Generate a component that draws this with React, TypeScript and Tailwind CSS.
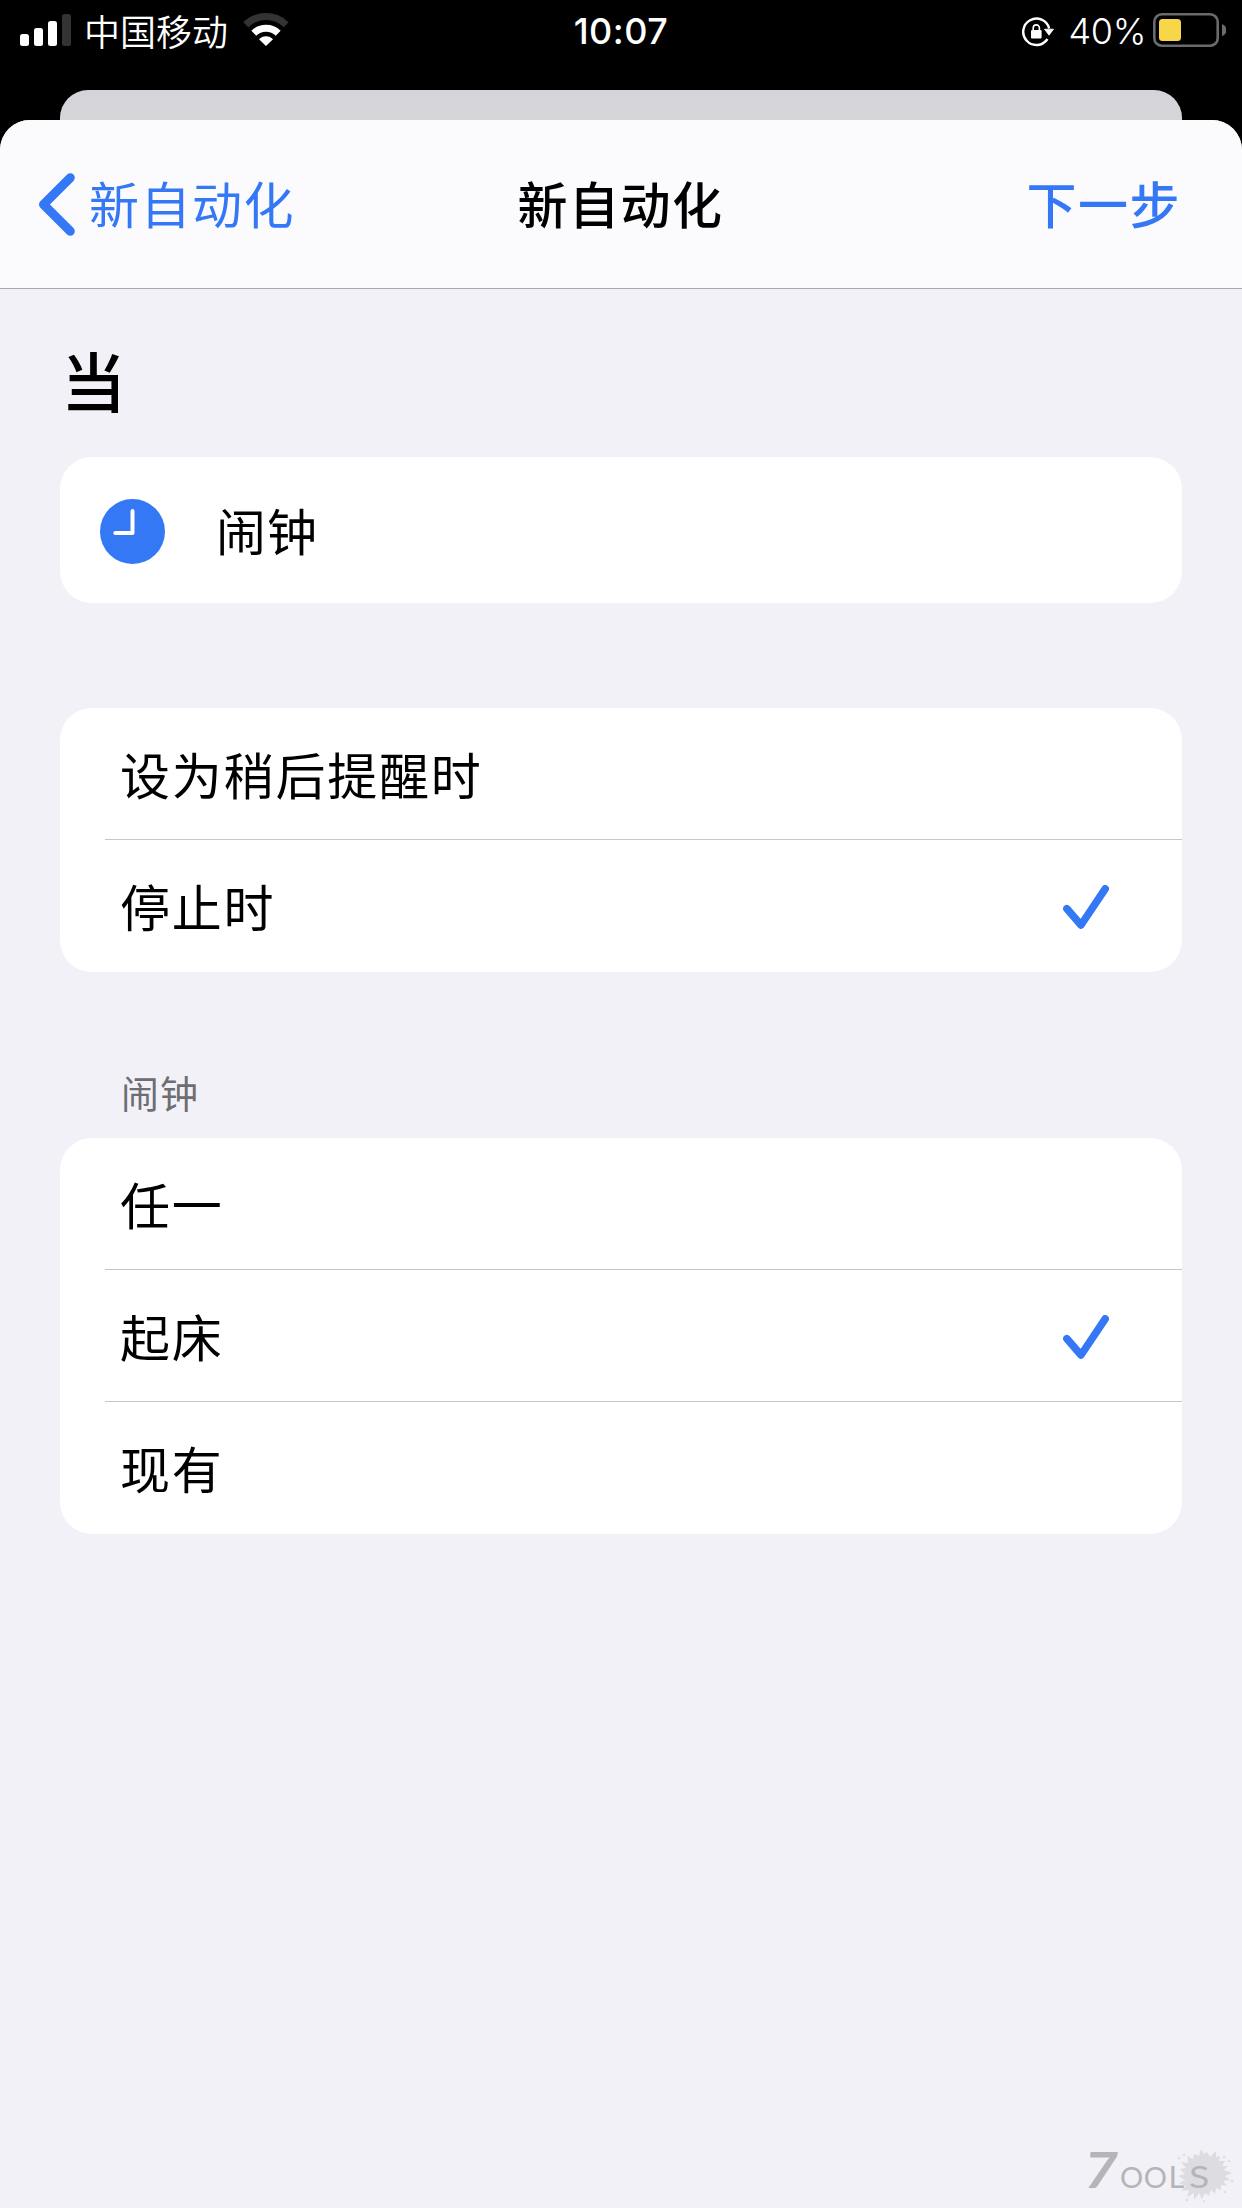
import React, { useState } from 'react';

interface OptionListProps {
  options: string[];
  selected: string;
  onSelect: (option: string) => void;
}

function SignalBars() {
  return (
    <svg className="w-[51px] h-8" viewBox="0 0 51 32" fill="#fff">
      <rect x="0" y="20" width="9" height="12" rx="2.5" />
      <rect x="14" y="14" width="9" height="18" rx="2.5" />
      <rect x="28" y="7" width="9" height="25" rx="2.5" />
      <rect x="42" y="0" width="9" height="32" rx="2.5" fill="#333" />
    </svg>
  );
}

function WifiIcon() {
  return (
    <svg className="w-[46px] h-[33px]" viewBox="0 0 46 33" fill="none">
      <path d="M2.8 11.8 A29 29 0 0 1 43.2 11.8" stroke="#333" strokeWidth="7" />
      <path d="M10.8 20.2 A17.5 17.5 0 0 1 35.2 20.2" stroke="#fff" strokeWidth="7" />
      <path d="M16 26.3 A9.5 9.5 0 0 1 30 26.3 L23 33 Z" fill="#fff" />
    </svg>
  );
}

function RotationLockIcon() {
  return (
    <svg className="w-8 h-[30px]" viewBox="0 0 32 30" fill="none" stroke="#fff">
      <path d="M25.5 22 A13.2 13.2 0 1 1 27.2 11.5" strokeWidth="2.4" />
      <path d="M22.5 12.2 H31.5 L27 18.2 Z" fill="#fff" strokeWidth="0.8" strokeLinejoin="round" />
      <rect x="9" y="13" width="10.6" height="8.4" rx="1.2" fill="#fff" stroke="none" />
      <path d="M11.2 13.5 V11 A3.1 3.1 0 0 1 17.4 11 V13.5" strokeWidth="1.6" />
    </svg>
  );
}

function BatteryIcon() {
  return (
    <svg className="w-[73px] h-[34px]" viewBox="0 0 73 34">
      <rect x="1.3" y="1.3" width="63.4" height="31.4" rx="7.5" fill="none" stroke="#6b6b6b" strokeWidth="2.6" />
      <rect x="6" y="6" width="22" height="22" rx="3.5" fill="#f7d64a" />
      <path d="M69 11 A6.3 6.3 0 0 1 69 23 Z" fill="#6b6b6b" />
    </svg>
  );
}

function ClockIcon() {
  return (
    <svg className="w-[65px] h-[65px]" viewBox="0 0 65 65" fill="none">
      <circle cx="32.5" cy="32.5" r="32.5" fill="#3478f6" />
      <path d="M32.5 12 V34 H15.3" stroke="#fff" strokeWidth="4" strokeLinecap="round" strokeLinejoin="round" />
    </svg>
  );
}

function CheckIcon() {
  return (
    <svg className="w-[46px] h-11" viewBox="0 0 46 44" fill="none">
      <path
        d="M3.9 23.7 L18 40 L42.2 3.9"
        stroke="#3478f6"
        strokeWidth="7.6"
        strokeLinecap="round"
        strokeLinejoin="round"
      />
    </svg>
  );
}

function Splash() {
  return (
    <svg className="absolute right-0.5 top-0 w-[60px] h-[58px]" viewBox="0 0 60 58" fill="#dddde1">
      <path d="M26 3 L29 8 L32 6 L35 11 L41 5 L41 11 L45 10 L44 15 L50 15 L47 20 L53 20 L49 24 L57 27 L50 30 L55 34 L48 35 L52 40 L46 39 L46 44 L41 42 L40 48 L36 44 L34 50 L30 47 L27 53 L24 47 L19 54 L19 47 L12 51 L14 44 L6 45 L11 40 L4 37 L10 34 L3 30 L10 28 L5 23 L11 22 L6 16 L13 17 L12 10 L18 13 L19 8 L24 10 Z" />
      <circle cx="4" cy="12" r="1.3" />
      <circle cx="9" cy="9" r="1.2" />
      <circle cx="49" cy="11" r="1.3" />
      <circle cx="54" cy="15" r="1.2" />
      <circle cx="57" cy="35" r="1.3" />
      <circle cx="50" cy="46" r="1.3" />
      <circle cx="12" cy="54" r="1.3" />
      <circle cx="29" cy="55" r="1" />
    </svg>
  );
}

function OptionList({ options, selected, onSelect }: OptionListProps) {
  return (
    <div className="bg-white rounded-[32px] overflow-hidden">
      {options.map((option, index) => (
        <button key={option} onClick={() => onSelect(option)} className="block w-full h-[132px] pl-[45px]">
          <div
            className={`flex h-full items-center justify-between pl-[15px] pr-[73px] ${
              index < options.length - 1 ? 'border-b border-[#c6c6c8]' : 'pb-px'
            }`}
          >
            <span className="pt-[7px] text-[50px] leading-[76px] tracking-[1.8px]">{option}</span>
            {selected === option && <span className="pt-[3px]"><CheckIcon /></span>}
          </div>
        </button>
      ))}
    </div>
  );
}

export default function App() {
  const [trigger, setTrigger] = useState('停止时');
  const [alarm, setAlarm] = useState('起床');

  return (
    <div className="flex flex-col w-[1242px] h-[2208px] bg-black text-black overflow-hidden font-[Inter,'Noto_Sans_CJK_SC',sans-serif]">
      {/* Status bar */}
      <div className="grid grid-cols-3 h-[90px] pt-[13px] pl-5 pr-4 text-white">
        <div className="flex items-start">
          <span className="pt-px"><SignalBars /></span>
          <span className="ml-[13px] pt-0.5 text-[36px] leading-9 font-[350]">中国移动</span>
          <span className="ml-[15px]"><WifiIcon /></span>
        </div>
        <div className="pr-1 text-center text-[36px] leading-9 font-medium tracking-[0.5px]">10:07</div>
        <div className="flex items-start justify-end">
          <span className="mt-1"><RotationLockIcon /></span>
          <span className="ml-[15px] text-[36px] leading-9 font-light tracking-[-0.4px]">40%</span>
          <span className="ml-[7px]"><BatteryIcon /></span>
        </div>
      </div>

      {/* Sheet behind */}
      <div className="h-[30px] mx-[60px] shrink-0 bg-[#d5d4d9] rounded-t-[28px]" />

      <div className="relative flex flex-1 flex-col bg-[#f2f1f7] rounded-t-[30px] overflow-hidden">
        {/* Navigation bar */}
        <div className="grid grid-cols-[1fr_auto_1fr] items-center h-[169px] pl-[38px] pr-[61px] bg-[#fbfbfd] border-b border-[#a9a9ac] text-[50px] leading-[76px] tracking-[1.5px]">
          <button className="flex items-center text-[#3478f6]">
            <svg className="w-[37px] h-[63px]" viewBox="0 0 37 63" fill="none">
              <path
                d="M32.3 4.7 L5.5 31.5 L32.3 58.3"
                stroke="#3478f6"
                strokeWidth="9"
                strokeLinecap="round"
                strokeLinejoin="round"
              />
            </svg>
            <span className="ml-[14px] pt-[4px]">新自动化</span>
          </button>
          <h1 className="pl-[22px] pt-[4px] text-center font-medium">新自动化</h1>
          <button className="pt-[4px] text-right font-medium text-[#3478f6]">下一步</button>
        </div>

        {/* Content */}
        <div className="px-[60px]">
          <h2 className="mt-[50px] mb-[28px] pl-px h-[90px] text-[65px] leading-[90px] font-medium">当</h2>

          <div className="flex items-center h-[146px] pt-0.5 pl-10 bg-white rounded-[32px]">
            <ClockIcon />
            <span className="ml-[51px] pt-[3px] text-[50px] leading-[76px] tracking-[1px]">闹钟</span>
          </div>

          <div className="mt-[105px]">
            <OptionList options={['设为稍后提醒时', '停止时']} selected={trigger} onSelect={setTrigger} />
          </div>

          <div className="mt-[92px] mb-[14px] pl-[61px] h-[60px] text-[38px] leading-[60px] tracking-[1px] text-[#6d6d72]">闹钟</div>
          <OptionList options={['任一', '起床', '现有']} selected={alarm} onSelect={setAlarm} />
        </div>

        {/* Watermark */}
        <div className="absolute right-[5px] bottom-1 w-[155px] h-[58px]">
          <Splash />
          <div className="relative flex items-baseline h-full text-[#b5b5b8] font-[Lato,sans-serif]">
            <span className="w-[38px] pl-0.5 text-[49px] leading-[46px] font-bold italic">
              <span className="inline-block origin-left scale-x-[1.2]">7</span>
            </span>
            <span className="text-[29px] leading-8 tracking-[0.5px]">OO</span>
            <span className="w-[18px] pl-px text-[31px] leading-8">L</span>
            <span className="pl-1 text-[30px] leading-8">
              <span className="inline-block origin-left scale-x-[1.25]">S</span>
            </span>
          </div>
        </div>
      </div>
    </div>
  );
}
